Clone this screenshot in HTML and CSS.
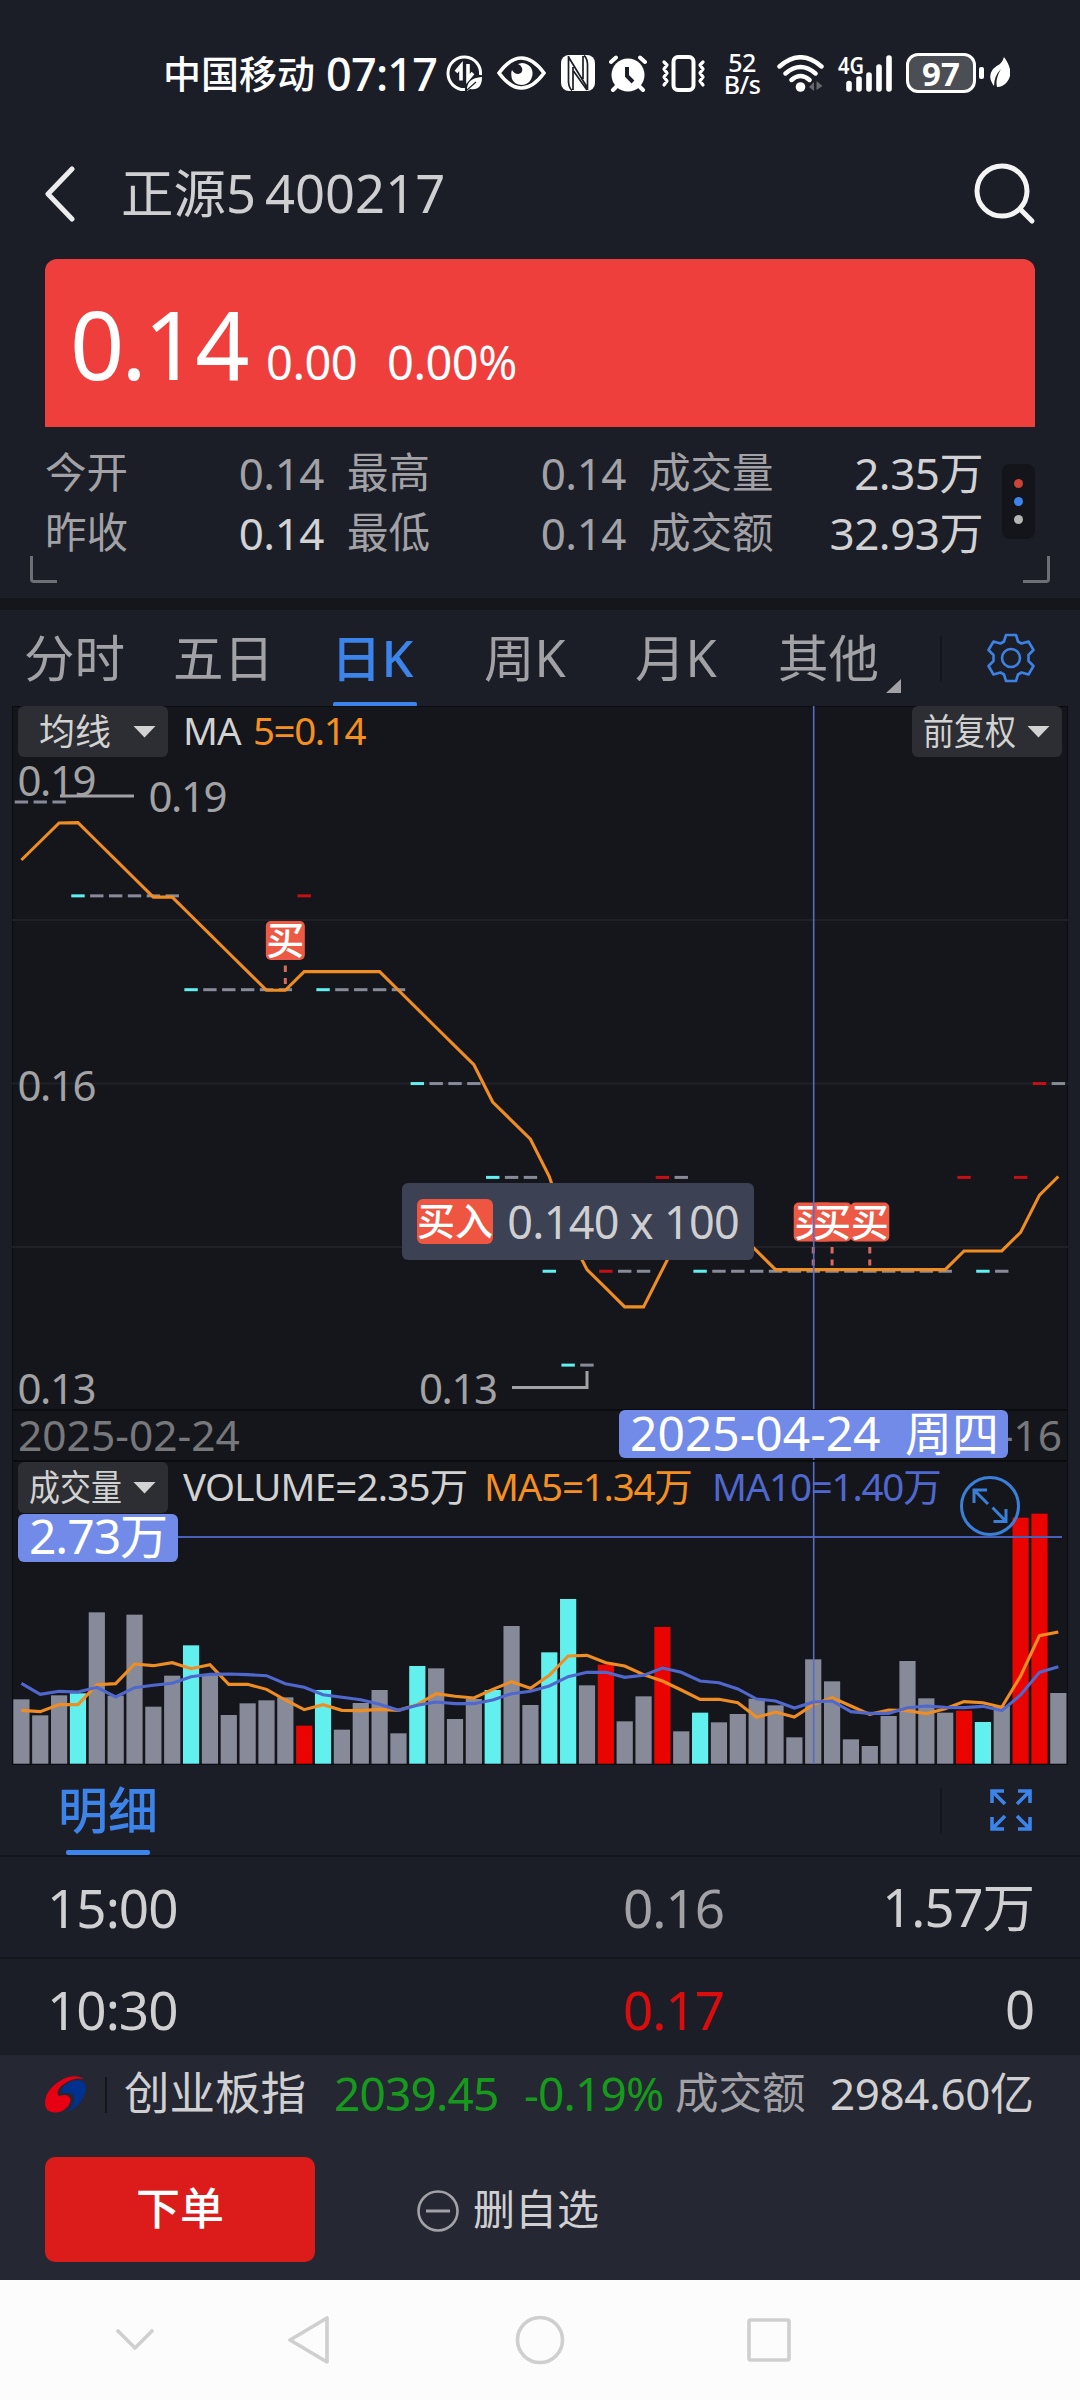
FILE: index.html
```html
<!DOCTYPE html>
<html lang="zh-CN">
<head>
<meta charset="utf-8">
<title>正源5 400217</title>
<link rel="stylesheet" href="styles.css">
</head>
<body>
<div class="app">
  <div class="statusbar">
    <span class="carrier">中国移动</span>
    <span class="clock">07:17</span>
    <svg class="si-data" width="37" height="37" viewBox="0 0 37 37" fill="none" stroke="#fff" stroke-width="3">
      <path d="M34.500 20A16.300 16.300 0 1 0 19 34.600"/>
      <path d="M10 17l5-6v14.500M22 9v15l5-6" stroke-width="3.600"/>
      <path d="M21 36q-1-13 15-14q0 14-12 12" fill="#fff" stroke="none"/><path d="M21 35l9-8" stroke="#1c1e27" stroke-width="1.200"/>
    </svg>
    <svg class="si-eye" width="49" height="34" viewBox="0 0 49 34" fill="none">
      <path d="M2 17Q13 2 24.500 2T47 17Q36 32 24.500 32T2 17Z" stroke="#fff" stroke-width="3.600"/>
      <path d="M25 7C36 8 38 18 33 25C28 31 18 30 15 23C14 19 14 16 15 14C18 20 27 19 25 12Q24 9 21 8Z" fill="#fff"/>
    </svg>
    <svg class="si-nfc" width="34" height="36" viewBox="0 0 34 36">
      <rect width="34" height="36" rx="8" fill="#fff"/>
      <path d="M7.500 1V27Q8 33 11 35.500M26.500 35V9Q26 3 23 .5M12 12V35M22 24V1M7.500 2L26.500 33M12.500 16L26 35" stroke="#1c1e27" stroke-width="1.700" fill="none"/>
    </svg>
    <svg class="si-alarm" width="38" height="37" viewBox="0 0 38 37" stroke="#fff" stroke-width="4" stroke-linecap="round">
      <circle cx="19" cy="20" r="16.500" fill="#fff" stroke="none"/>
      <path d="M2 7L7 2.500M36 7L31 2.500M8 31L4 35M30 31L34 35"/>
      <path d="M18 12V21L24 27" stroke="#1c1e27" stroke-linecap="butt" fill="none"/>
    </svg>
    <svg class="si-vib" width="45" height="37" viewBox="0 0 45 37" fill="none" stroke="#fff">
      <rect x="12.500" y="2" width="20" height="33" rx="4.500" stroke-width="4"/>
      <path d="M3 7L6 10L3 14L6 18L3 22L6 26L3 30M42 7L39 10L42 14L39 18L42 22L39 26L42 30" stroke-width="3.200" stroke-linecap="round" stroke-linejoin="round"/>
    </svg>
    <span class="speed"><span>52</span><span>B/s</span></span>
    <svg class="si-wifi" width="47" height="37" viewBox="0 0 47 37" fill="none" stroke="#fff" stroke-width="4.400" stroke-linecap="round">
      <path d="M2.500 11.500Q23.500-7 44.500 11.500M8.500 18.500Q23.500 5.500 38.500 18.500M14.500 25Q23.500 17 32.500 25"/>
      <circle cx="23.500" cy="32" r="4.800" fill="#fff" stroke="none"/>
      <path d="M32 32l5-5v9zM45.500 31l-6-5v9z" fill="#66686e" stroke="none"/>
    </svg>
    <svg class="si-signal" width="54" height="37" viewBox="0 0 54 37">
      <text x="0" y="18.500" textLength="26" lengthAdjust="spacingAndGlyphs">4G</text>
      <path d="M11 28.500V34M21 24V34M31 20V34M41 12V34M51 3V34" stroke="#fff" stroke-width="5.600" stroke-linecap="round"/>
    </svg>
    <span class="battery"><span>97</span></span>
    <span class="cap"></span>
    <svg class="si-leaf" width="20" height="32" viewBox="0 0 20 32"><path d="M14 0Q25 15 17 25Q13 30 7 30Q5 22 11 12Q4 19 4 29Q-3 20 3 12Q6 9 10 7Q13 4 14 0Z" fill="#fff"/></svg>
  </div>

  <div class="titlebar">
    <svg width="32" height="56" viewBox="0 0 32 56" fill="none" stroke="#ececec" stroke-width="5" stroke-linecap="round" stroke-linejoin="round"><path d="M28 3L4 28L28 53"/></svg>
    <span class="title">正源5 <span class="code">400217</span></span>
    <svg class="search" width="62" height="62" viewBox="0 0 62 62" fill="none" stroke="#f4f4f4" stroke-width="5" stroke-linecap="round"><circle cx="28" cy="28" r="25"/><path d="M46 46L58 58"/></svg>
  </div>

  <div class="pricecard">
    <span class="price">0.14</span><span class="chg">0.00</span><span class="pct">0.00%</span>
  </div>

  <div class="quote">
    <div class="qgrid">
      <span>今开</span><span class="v">0.14</span><span>最高</span><span class="v">0.14</span><span>成交量</span><span class="v lit">2.35万</span>
      <span>昨收</span><span class="v lit">0.14</span><span>最低</span><span class="v">0.14</span><span>成交额</span><span class="v lit">32.93万</span>
    </div>
    <div class="more"><i class="r"></i><i class="b"></i><i class="g"></i></div>
    <i class="corner left"></i><i class="corner right"></i>
  </div>

  <div class="tabs">
    <span class="t1">分时</span><span class="t2">五日</span><span class="t3 active">日K</span><span class="t4">周K</span><span class="t5">月K</span><span class="t6">其他</span>
    <i class="corner-tri"></i><i class="vsep"></i>
    <svg width="50" height="50" viewBox="-25 -25 50 50" fill="none" stroke="#3c82e4" stroke-width="2.600" stroke-linejoin="round"><path d="M-5-23H5L7-16.500L10.500-14.500L17.500-16.500L22.500-8L17.500-3V3L22.500 8L17.500 16.500L10.500 14.500L7 16.500L5 23H-5L-7 16.500L-10.500 14.500L-17.500 16.500L-22.500 8L-17.500 3V-3L-22.500-8L-17.500-16.500L-10.500-14.500L-7-16.500Z"/><circle r="9"/></svg>
  </div>

  <div class="chart">
    <svg class="plot" id="plot" width="1056" height="1059" viewBox="12 706 1056 1059"></svg>
    <div class="kpane">
      <span class="drop wide"><b>均线</b><i></i></span>
      <span class="lg ma">MA</span><span class="lg orange ma5">5=0.14</span>
      <span class="drop narrow"><b>前复权</b><i></i></span>
    </div>
    <div class="dates"><span>2025-02-24</span><span>2025-05-16</span></div>
    <div class="vhead">
      <span class="drop narrow"><b>成交量</b><i></i></span>
      <span class="lg vol">VOLUME=2.35万</span><span class="lg orange vma5">MA5=1.34万</span><span class="lg blue vma10">MA10=1.40万</span>
    </div>
    <div class="vpill">2.73万</div>
    <div class="datepill"><span>2025-04-24</span><span class="wd">周四</span></div>
    <div class="tip"><b>买入</b><span>0.140 x 100</span></div>
    <svg class="grow" width="62" height="62" viewBox="-31 -31 62 62" fill="none" stroke="#3a80d8" stroke-width="3"><circle r="28.500"/><path d="M-2-2L-16-16M-16-3V-16H-3M2.500 1.500L16 15.500M3.500 15.500H16V3"/></svg>
  </div>

  <div class="dhead">
    <span class="dt">明细</span><i class="vsep"></i>
    <svg width="44" height="44" viewBox="0 0 44 44" fill="none" stroke="#3c84ea" stroke-width="3.600"><path d="M3 15V3H15M3 3L16 16M29 3H41V15M41 3L28 16M3 29V41H15M3 41L16 28M29 41H41V29M41 41L28 28"/></svg>
  </div>
  <div class="drow"><span>15:00</span><span class="p">0.16</span><span class="q">1.57万</span></div>
  <div class="drow second"><span>10:30</span><span class="p red">0.17</span><span class="q">0</span></div>

  <div class="bottom">
    <div class="index">
      <svg width="42" height="38" viewBox="0 0 42 38"><path d="M38.500 3C35-.5 25-1.500 15 5C5 11 0 19 0 27C0 33 4 37 11 36.500C19 36 25 30 25.500 24C25.500 20 21 17.500 14 20C10.500 17 14 11 19 8C26 3 33 1.500 38.500 3Z" fill="#e60012"/><path d="M19.500 9.500C25 5 31 3.500 36 4.500C42 7 42 14 38.500 21C35 28 29 33.500 22 36C27 31.500 30 25 29 21C28 16.500 23.500 16 18 17.500C16 15 17 12 19.500 9.500Z" fill="#00318f"/></svg>
      <i class="isep"></i>
      <span class="iname">创业板指</span><span class="green ival">2039.45</span><span class="green ipct">-0.19%</span><span class="ilab">成交额</span><span class="iamt">2984.60亿</span>
    </div>
    <div class="actions">
      <span class="order">下单</span>
      <svg width="42" height="42" viewBox="0 0 42 42" fill="none" stroke="#a2a2a6"><circle cx="21" cy="21" r="19.500" stroke-width="2.600"/><path d="M9 21H33" stroke-width="3"/></svg>
      <span class="del">删自选</span>
    </div>
  </div>

  <div class="nav">
    <svg width="1080" height="120" viewBox="0 2280 1080 120" fill="none" stroke="#cfcfcf" stroke-width="3.600" stroke-linejoin="round" stroke-linecap="round"><path d="M118 2331L135 2348L152 2331M327 2318V2362L290 2340Z"/><circle cx="540" cy="2340" r="22.500"/><rect x="749" y="2320" width="40" height="40" rx="1.500"/></svg>
  </div>
</div>
<script src="chart.js"></script>
</body>
</html>
```
FILE: styles.css
```css
* { box-sizing: border-box; }
body { margin: 0; background: #1c1e27; font-family: "Noto Sans", "Noto Sans CJK SC", sans-serif; color: #d0d0d2; }
i, b { font-style: normal; font-weight: inherit; }
svg { display: block; flex: none; }
span { white-space: nowrap; }
.app { width: 1080px; height: 2400px; overflow: hidden; display: flex; flex-direction: column; line-height: 1; }
.app > div { flex: none; }

.statusbar { height: 146px; display: flex; align-items: center; padding-left: 163px; color: #fff; font-weight: 500; }
.carrier { width: 163px; font-size: 38px; }
.clock { width: 120px; font-size: 45px; letter-spacing: -.8px; }
.si-eye { margin-left: 14px; }
.si-nfc { margin-left: 15px; }
.si-alarm { margin-left: 14px; }
.si-vib { margin-left: 14px; }
.speed { width: 38px; margin-left: 17px; display: flex; flex-direction: column; align-items: center; font-size: 25px; line-height: 22px; letter-spacing: -.5px; }
.si-wifi { margin-left: 16px; }
.si-signal { margin-left: 14px; overflow: visible; }
.si-signal text { font-size: 23px; font-weight: 600; fill: #fff; }
.battery { width: 70px; height: 40px; margin-left: 14px; border: 3px solid #fff; border-radius: 12px; background: #4c4e55; display: flex; align-items: center; justify-content: center; font-size: 33px; font-weight: 700; }
.cap { width: 5px; height: 12px; margin-left: 3px; border-radius: 2px; background: #fff; }
.si-leaf { margin-left: 6px; }

.titlebar { height: 113px; display: flex; align-items: center; padding: 0 44px 18px 44px; }
.title { margin-left: 45px; font-size: 52.5px; display: flex; gap: 9px; color: #cfcfd1; }
.search { margin-left: auto; }

.pricecard { height: 168px; margin: 0 45px; padding: 37px 0 0 25px; background: #ef3f3d; border-radius: 12px 12px 0 0; color: #fff; display: flex; align-items: baseline; }
.price { width: 196px; font-size: 95px; letter-spacing: -3px; }
.chg { width: 121px; font-size: 47px; letter-spacing: -.5px; }
.pct { font-size: 47px; letter-spacing: -.5px; }

.quote { height: 171px; position: relative; display: flex; padding-left: 45px; }
.qgrid { width: 938px; display: grid; grid-template-columns: 100px 179px 110px 192px 140px 217px; grid-template-rows: 60px 60px; padding-top: 16px; font-size: 41.5px; color: #a2a2a6; align-items: center; }
.qgrid > span:nth-child(6n+3), .qgrid > span:nth-child(6n+5) { margin-left: 23px; }
.qgrid .v { text-align: right; font-size: 44px; letter-spacing: -.5px; }
.qgrid .lit { color: #d2d2d4; }
.more { width: 33px; height: 75px; margin: 37px 0 0 19px; border-radius: 8px; background: #14151a; display: flex; flex-direction: column; align-items: center; justify-content: center; gap: 9px; }
.more i { width: 9px; height: 9px; border-radius: 50%; }
.more .r { background: #cb4436; }
.more .b { background: #3c84ea; }
.more .g { background: #b4b4b4; }
.corner { position: absolute; top: 129px; width: 27px; height: 27px; border-bottom: 3px solid #6d6f75; }
.corner.left { left: 30px; border-left: 3px solid #6d6f75; border-bottom-left-radius: 4px; }
.corner.right { right: 30px; border-right: 3px solid #6d6f75; border-bottom-right-radius: 4px; }

.tabs { height: 108px; border-top: 12px solid #15161b; display: flex; align-items: center; padding-left: 24px; font-size: 50.5px; color: #a2a2a6; }
.tabs .t1 { width: 149px; }
.tabs .t2 { width: 158px; }
.tabs .t3 { width: 153px; }
.tabs .t4 { width: 151px; }
.tabs .t5 { width: 143px; }
.tabs .t6 { width: 108px; }
.active { color: #3c84ea; font-weight: 500; position: relative; }
.active::after { content: ""; position: absolute; left: 2px; top: 69px; width: 84px; height: 5px; border-radius: 2px; background: #3c84ea; }
.corner-tri { width: 15px; height: 14px; margin-top: 56px; background: #a2a2a6; clip-path: polygon(100% 0, 100% 100%, 0 100%); }
.vsep { width: 2px; height: 45px; background: #15161b; }
.tabs .vsep { margin: 0 44px 0 39px; }

.chart { height: 1059px; margin: 0 12px; position: relative; background: #15161b; border: 1px solid #0b0c10; display: flex; flex-direction: column; }
.plot { position: absolute; left: -1px; top: -1px; }
.plot text { font-size: 42px; fill: #a2a2a4; }
.plot .buy { font-size: 38px; fill: #fff; font-weight: 500; }
.kpane, .vhead { position: relative; display: flex; padding: 0 5px; }
.kpane { height: 703px; margin-top: -1px; }
.drop { width: 150px; height: 51px; border-radius: 6px; background: #2d2e33; display: flex; align-items: center; justify-content: space-between; padding: 0 12px 0 21px; color: #d2d2d2; }
.drop b { font-size: 36px; }
.drop i { width: 23px; height: 12px; background: #d2d2d2; clip-path: polygon(0 0, 100% 0, 50% 100%); }
.narrow { padding-left: 11px; }
.narrow b { width: 92px; transform: scaleX(.86); transform-origin: 0 50%; }
.kpane .narrow { margin-left: auto; }
.lg { font-size: 38.5px; line-height: 48px; color: #d2d2d2; letter-spacing: -.8px; }
.orange { color: #f58f20; }
.blue { color: #5068ce; }
.ma { margin-left: 15px; width: 70px; }
.ma5 { letter-spacing: -1.4px; }
.dates { position: relative; height: 53px; border-top: 2px solid #0b0c10; border-bottom: 2px solid #0b0c10; display: flex; justify-content: space-between; align-items: center; padding: 0 5px; font-size: 42.5px; color: #77787c; }
.vhead { height: 52px; }
.vol { margin-left: 15px; width: 301px; }
.vma5 { width: 228px; letter-spacing: -1.2px; }
.vma10 { letter-spacing: -1.2px; }
.vpill { position: relative; width: 160px; height: 48px; margin-left: 5px; border-radius: 6px; background: #728be8; color: #fff; font-size: 48px; line-height: 44px; text-align: center; letter-spacing: -1px; }
.datepill { position: absolute; left: 606px; top: 703px; width: 389px; height: 48px; border-radius: 6px; background: #728be8; color: #fff; font-size: 48px; line-height: 46px; display: flex; justify-content: space-between; padding: 0 9px 0 11px; }
.wd { font-size: 47px; }
.tip { position: absolute; left: 389px; top: 476px; width: 352px; height: 77px; border-radius: 6px; background: #3c4153; display: flex; align-items: center; justify-content: space-between; padding: 0 15px; font-size: 45px; letter-spacing: -.7px; color: #cfcfd1; }
.tip b { width: 76px; height: 45px; border-radius: 6px; background: #ee5642; color: #fff; font-size: 38px; line-height: 43px; letter-spacing: 0; font-weight: 500; }
.grow { position: absolute; left: 946px; top: 768px; }

.dhead { height: 92px; border-bottom: 2px solid #14151b; display: flex; align-items: center; padding-left: 58px; }
.dt { font-size: 50px; color: #3c84ea; font-weight: 500; position: relative; }
.dt::after { content: ""; position: absolute; left: 8px; top: 65px; width: 84px; height: 5px; border-radius: 2px; background: #3c84ea; }
.dhead .vsep { margin: 0 47px 0 auto; }
.dhead svg { margin-right: 47px; }
.drow { height: 102px; border-bottom: 2px solid #14151b; display: grid; grid-template-columns: 576px 1fr auto; align-items: center; padding: 0 46px 0 47px; font-size: 53px; letter-spacing: -1px; color: #d0d0d2; }
.drow .p { color: #a2a2a6; }
.drow .red { color: #dc0c0c; }
.drow .q { font-size: 52.5px; }
.second { height: 96px; border: 0; padding-top: 4px; }

.bottom { height: 225px; background: #252733; display: flex; flex-direction: column; }
.index { height: 76px; padding-left: 45px; display: flex; align-items: center; font-size: 46px; color: #d0d0d2; }
.index svg { margin-top: 4px; }
.isep { width: 2px; height: 36px; margin: 4px 17px 0 18px; background: #15161b; }
.iname { width: 210px; font-size: 45.5px; }
.ival { width: 190px; }
.ipct { width: 151px; }
.green { color: #159a1c; letter-spacing: -.8px; }
.ilab { width: 155px; font-size: 43.5px; color: #a2a2a6; }
.iamt { letter-spacing: -.4px; font-size: 44px; }
.actions { height: 149px; padding: 26px 0 0 45px; display: flex; }
.order { width: 270px; height: 105px; border-radius: 10px; background: #dc1c1b; color: #fff; font-weight: 500; font-size: 44px; line-height: 103px; text-align: center; }
.actions svg { margin: 33px 14px 0 102px; }
.del { font-size: 42px; line-height: 103px; color: #d0d0d2; }
.nav { height: 120px; background: #fcfcfc; }
```
FILE: chart.js
```js
// Daily chart: 56 sessions, close drawn as a dash, plus MA5 and the volume pane.
const X0 = 21.4, STEP = 18.853;
const GRAY = '#878b99', CYAN = '#62f0ee', RED = '#ea0400';
const x = i => X0 + i * STEP;
const closes = [19,19,19,18,18,18,18,18,18,17,17,17,17,17,17,18,17,17,17,17,17,16,16,16,16,15,15,15,14,13,13,14,14,14,15,15,
  14,14,14,14,14,14,14,14,14,14,14,14,14,14,15,14,14,15,16,16];
const volTop = [898,946,886,880,637,887,644,920,827,736,823,945,910,901,892,977,870,989,909,870,1000,798,805,957,897,870,678,915,
  757,597,856,794,964,889,681,994,938,967,942,896,916,1012,778,844,1018,1038,948,783,895,938,932,966,918,353,341,879];
const ma5 = [931,935,914,914,854,851,792,797,788,806,794,853,853,868,900,929,914,931,932,928,931,914,881,889,894,868,845,865,
  826,768,766,788,798,824,843,870,898,898,908,952,936,951,914,893,918,943,930,932,941,926,905,908,922,828,707,696];
const ma10 = [850,883,874,876,862,891,863,856,850,830,823,822,824,827,851,862,884,892,899,913,931,916,906,911,911,900,881,874,
  858,830,817,817,832,826,804,817,843,848,867,897,903,924,906,903,935,940,940,923,918,922,923,919,932,885,817,800];

const line = (pts, color, w) => `<polyline points="${pts.join(' ')}" fill="none" stroke="${color}" stroke-width="${w}"/>`;
const path = (d, color, w) => `<path d="${d}" fill="none" stroke="${color}" stroke-width="${w}"/>`;
const label = (tx, ty, s) => `<text x="${tx}" y="${ty}" textLength="79">${s}</text>`;
const tone = i => i === 0 || closes[i] === closes[i - 1] ? GRAY : closes[i] > closes[i - 1] ? RED : CYAN;

let out = path('M12 920H1068M12 1083.5H1068M12 1247H1068', '#202126', 2);
out += label(17.5, 796, '0.19') + label(148.5, 812, '0.19') + label(17.5, 1101, '0.16') + label(17.5, 1404, '0.13') + label(419, 1404, '0.13');
out += path('M60 796H134', '#a2a2a4', 3) + path('M512 1387.5H587V1371', '#a2a2a4', 3);

closes.forEach((c, i) => {
  const cy = 802 + (19 - c) * 93.85;
  const col = tone(i) === RED ? '#c41014' : tone(i);
  out += `<rect x="${x(i) - 6.7}" y="${cy - 1.5}" width="13.4" height="3" fill="${col}"/>`;
  const h = 1400 + volTop[i] / 3;
  out += `<rect x="${x(i) - 8.1}" y="${h}" width="16.2" height="${1763.7 - h}" fill="${tone(i)}"/>`;
});

// Four sessions before the window closed at 0.19, except for the first three averages.
const hist = [19, 19, 19, 19].concat(closes);
const pts = closes.map((_, i) => {
  const avg = hist.slice(i, i + 5).reduce((a, b) => a + b) / 5;
  return [x(i), 804 + (19 - avg) * 93.12];
});
pts[0][1] = 860; pts[1][1] = 841.5; pts[2][1] = 823;
out += line(pts, '#f08d22', 3.1);
out += line(ma5.map((v, i) => [x(i), 1400 + v / 3]), '#f08d22', 3.1);
out += line(ma10.map((v, i) => [x(i), 1400 + v / 3]), '#5068ce', 3.1);

out += path('M178 1537H1062', '#4a60b6', 2);
[[14, 921], [42, 1202.5], [43, 1202.5], [45, 1202.5]].forEach(([i, ty]) => {
  out += `<rect x="${x(i) - 19.5}" y="${ty}" width="39" height="39" rx="5" fill="#ec5a45"/>`;
  out += `<text class="buy" x="${x(i) - 19}" y="${ty + 33}">买</text>`;
  out += path(`M${x(i)} ${ty + 44.5}V${ty + 51}M${x(i)} ${ty + 57}V${ty + 63}`, '#d9695c', 3);
});
out += path('M813.7 706V1764', '#566cc4', 1.6);
document.getElementById('plot').innerHTML = out;
```
